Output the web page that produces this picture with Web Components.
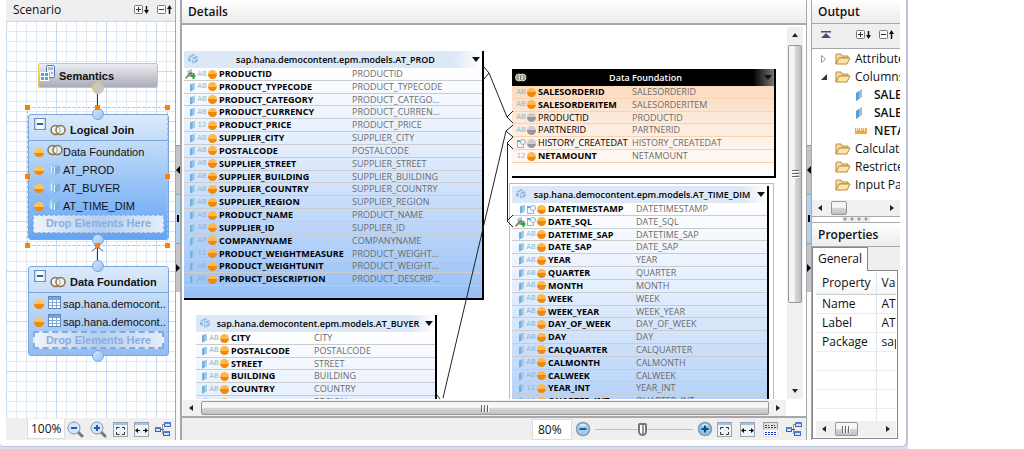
<!DOCTYPE html>
<html lang="en">
<head>
<meta charset="utf-8">
<title>Calculation view editor</title>
<style>
  html, body { margin: 0; height: 100%; background: #fff; overflow: hidden; }
  body { font: 12px/18px "Open Sans", "Noto Sans", sans-serif; color: #111; }
</style>
</head>
<body>
<app-window>
  <scenario-pane></scenario-pane>
  <pane-sash></pane-sash>
  <details-pane></details-pane>
  <pane-sash></pane-sash>
  <side-stack>
    <output-pane></output-pane>
    <properties-pane></properties-pane>
  </side-stack>
</app-window>
<script>
const svg = (w, h, body) => `<svg width="${w}" height="${h}" viewBox="0 0 ${w} ${h}" aria-hidden="true">${body}</svg>`;

const schema = `<g stroke="#3c62ae" fill="#d5e4f8"><rect x=".5" y="6.500" width="5" height="4"/><rect x="9.500" y="1.500" width="6" height="4"/><rect x="8.500" y="10.500" width="6" height="4"/></g><path d="M0 6h6v2H0zM9 1h7v2h-7zM8 10h7v2H8z" fill="#4c7fd8"/><path d="M6 8.500h3M7.500 8.500v-5h2M7.500 8.500v4h1" stroke="#444" fill="none" stroke-dasharray="1 1"/>`;
const frame = `<rect x=".5" y=".5" width="14" height="14" fill="#eef5fa" stroke="#9aa4ac"/><path d="M1 1h13v2H1z" fill="#a9c3dc"/>`;

const icons = {
  expand: svg(16, 12, `<rect x=".5" y="1.500" width="8" height="8" rx="1" fill="#fafafa" stroke="#777"/><path d="M2 5.500h5M4.500 3v5" stroke="#333"/><path d="M12.500 2v6" stroke="#111" stroke-width="1.500"/><path d="M10 6h5l-2.500 4z" fill="#111"/>`),
  collapse: svg(16, 12, `<rect x=".5" y="1.500" width="8" height="8" rx="1" fill="#fafafa" stroke="#777"/><path d="M2 5.500h5" stroke="#333"/><path d="M12.500 4v6" stroke="#111" stroke-width="1.500"/><path d="M10 5h5l-2.500-4z" fill="#111"/>`),
  top: svg(10, 8, `<path d="M0 0h10v1.500H0zM5 2l5 5H0z" fill="#4e4a78"/>`),
  folder: svg(16, 12, `<path d="M1 11V2q0-1 1-1h4l1 2h6v2H5z" fill="#f8dfa0" stroke="#b88a3a"/><path d="M1 11l3-6h11l-3 6z" fill="#fbe6a8" stroke="#b88a3a"/>`),
  attr: svg(8, 12, `<path d="M1 4l6-4v8l-6 4z" fill="#8ec0e6"/><path d="M1 4l3-2v8l-3 2z" fill="#5b9fd4"/>`),
  attrSmall: svg(7, 10, `<path d="M1 2.500L6 .5v7L1 9.500z" fill="#a4cdec"/><path d="M1 2.500l2.500-1v7L1 9.500z" fill="#74b0de"/>`),
  key: svg(11, 10, `<path d="M2 2l5-2v7l-3 1z" fill="#96c6ea"/><path d="M0 9l4-5 3-1 1 2-3 1-4 4z" fill="#8b7a48"/><path d="M8.500 4v6M5.500 7h5" stroke="#2ea043" stroke-width="2"/>`),
  measure: svg(12, 6, `<path d="M0 0h12v6H0z" fill="#f6a63c"/><path d="M1.500 0v3M3.500 0v2M5.500 0v3M7.500 0v2M9.500 0v3" stroke="#fff3d8"/>`),
  date: svg(9, 9, `<rect x=".5" y="1.500" width="6" height="7" fill="#f2fbff" stroke="#7cc0dc"/><circle cx="6" cy="3" r="2.500" fill="#fff" stroke="#9ab"/><path d="M0 1h3v2H0z" fill="#5ab0d8"/>`),
  join: svg(16, 12, `<g fill="none" stroke="#8a7440" stroke-width="1.500"><circle cx="5.500" cy="6" r="4.500" fill="#fff" fill-opacity=".5"/><circle cx="10.500" cy="6" r="4.500" fill="#fff" fill-opacity=".5"/></g>`),
  joinSmall: svg(12, 9, `<g fill="#fff" fill-opacity=".6" stroke="#e8dcc0"><circle cx="4" cy="4.500" r="3.500"/><circle cx="7.500" cy="4.500" r="3.500"/></g><path d="M5.800 2v5" stroke="#6a5a30"/>`),
  view: svg(13, 13, `<path d="M1 3l5-3v2L3 4v6l-2 1z" fill="#a4cdec"/><path d="M4 5l5-3v2L6 6v5l-2 1z" fill="#8cc0e6"/><path d="M7 6l5-3v7l-5 3z" fill="#78aede"/><path d="M3.500 4v7M6.500 5v7" stroke="#e4f0fc"/>`),
  cubes: svg(12, 11, `<path d="M1 3l5-3 3 1-5 3v4L1 7zM5 4l4-2 2 1v4l-4 3-2-1z" fill="#8fbbe2"/><path d="M1 3l3 1 5-3M5 5l2 1 4-2M7 6v4" stroke="#dceaf8" fill="none"/>`),
  table: svg(13, 13, `<rect x=".5" y=".5" width="12" height="12" fill="#fff" stroke="#5f86bd"/><path d="M1 1h11v3H1z" fill="#7ba2d8"/><path d="M1 6.500h11M1 9.500h11M4.500 4v8M8.500 4v8" stroke="#86a8d4"/>`),
  semantics: svg(16, 17, `<rect x="6.500" y=".5" width="8" height="12" rx="1" fill="#e8f0fa" stroke="#4a78c0"/><rect x="8" y="2" width="5" height="3" fill="#9cc0ea"/><path d="M8 8h2M11 8h2M8 10h2" stroke="#c45"/><rect x="0" y="7" width="9" height="9" fill="#fff"/><path d="M1 8h3v3H1zM5 8h3v3H5zM1 12h3v3H1zM5 12h3v3H5z" fill="#58a4d8"/>`),
  zoomOut: svg(17, 17, `<path d="M11 11l4 4" stroke="#777" stroke-width="3" stroke-linecap="round"/><circle cx="7" cy="7" r="6" fill="#d4e6fa" stroke="#8898b0"/><path d="M4 7h6" stroke="#2858b8" stroke-width="2"/>`),
  zoomIn: svg(17, 17, `<path d="M11 11l4 4" stroke="#777" stroke-width="3" stroke-linecap="round"/><circle cx="7" cy="7" r="6" fill="#d4e6fa" stroke="#8898b0"/><path d="M4 7h6M7 4v6" stroke="#2858b8" stroke-width="2"/>`),
  fit: svg(15, 15, frame + `<path d="M3.500 7.500v-2h3M9 5.500h2.500v2M11.500 10v2.500H9M6.500 12.500h-3V10" stroke="#333" fill="none"/>`),
  fitWidth: svg(15, 15, frame + `<path d="M3 8.500h3M9 8.500h3" stroke="#111"/><path d="M1 8.500l3-2.500v5zM14 8.500l-3-2.500v5z" fill="#111"/>`),
  overview: svg(15, 15, `<rect x=".5" y=".5" width="14" height="7" fill="#e0e0e0" stroke="#999"/><rect x=".5" y="7.500" width="14" height="7" fill="#fff" stroke="#ddd"/><path d="M2 3.500h4M8 3.500h4M2 5.500h11" stroke="#445" stroke-dasharray="2 1"/><path d="M2 10.500h11M2 12.500h11" stroke="#2038d8" stroke-dasharray="2 1"/>`),
  schema: svg(16, 16, schema),
  minus: svg(16, 16, `<circle cx="8" cy="8" r="6.500" fill="#9cd0f2" stroke="#8a9aa8" stroke-width="1.500"/><path d="M4 5q4-4 8 0z" fill="#d8effc"/><path d="M4.500 8h7" stroke="#245a88" stroke-width="2"/>`),
  plus: svg(16, 16, `<circle cx="8" cy="8" r="6.500" fill="#86c6f0" stroke="#8a9aa8" stroke-width="1.500"/><path d="M4 5q4-4 8 0z" fill="#d8effc"/><path d="M4.500 8h7M8 4.500v7" stroke="#144a78" stroke-width="2"/>`)
};

const define = (name, render) => customElements.define(name, class extends HTMLElement {
  connectedCallback() {
    if (this.shadowRoot) return;
    const t = document.createElement('template');
    t.innerHTML = render(this);
    this.attachShadow({ mode: 'open' }).append(t.content.cloneNode(true));
  }
});

const base = `* { box-sizing: border-box; }
  svg { display: block; flex: none; }
  button { margin: 0; padding: 0; border: 0; background: none; color: inherit; font: inherit; display: block; flex: none; }
  ul { list-style: none; margin: 0; padding: 0; }
  h2, h3 { margin: 0; font: inherit; }`;

define('app-window', () => `<style>${base}
  :host { display: block; height: 100vh; margin-right: 116px; background: #d9deec; }
  main { display: flex; height: calc(100vh - 2px); padding: 0 6px 6px; border: solid #bcc2dc; border-width: 0 2px 1px 0; border-radius: 0 0 6px 4px; background: #fff; }
  ::slotted(details-pane) { flex: 1; min-width: 0; }
  </style><main><slot></slot></main>`);

define('side-stack', () => `<style>
  :host { display: flex; flex-direction: column; width: 88px; overflow: hidden; flex: none; }
  ::slotted(properties-pane) { flex: 1; min-height: 0; }
  </style><slot></slot>`);

define('pane-sash', () => `<style>${base}
  :host { display: flex; flex-direction: column; justify-content: center; width: 6px; flex: none; padding-bottom: 4px; background: #fafafa; border: solid #a8a8ac; border-width: 0 1px; box-sizing: border-box; }
  button { display: flex; align-items: center; justify-content: center; width: 4px; height: 49px; background: #c4c4c4; border: solid #999; border-width: 1px 0 0; }
  .mid { background: #b4d0ee; border-color: #8aa; }
  </style>
  <button aria-label="Collapse left">${svg(4, 8, '<path d="M4 0v8L0 4z"/>')}</button>
  <button class="mid" aria-label="Restore">${svg(2, 7, '<path d="M0 0h2v7H0z"/>')}</button>
  <button aria-label="Collapse right">${svg(4, 8, '<path d="M0 0v8l4-4z"/>')}</button>`);

/* scroll bar; parts holds the flex weights of the track before the thumb, the thumb, and the track after it */
define('scroll-bar', el => {
  const v = el.hasAttribute('vertical');
  const [a, b, c] = el.getAttribute('parts').split(' ');
  const arrow = pts => svg(6, 6, `<path d="${pts}" fill="#222"/>`);
  return `<style>${base}
  :host { display: flex; flex-direction: ${v ? 'column' : 'row'}; flex: none; ${v ? 'width: 16px' : 'height: 16px'}; background: #f0f0f0; }
  button { width: 16px; height: 16px; display: flex; align-items: center; justify-content: center; }
  .thumb { flex: ${b} 1 0; margin: 1px; display: flex; align-items: center; justify-content: center; border: 1px solid #989898; border-radius: 2px; background: linear-gradient(${v ? 'to right' : 'to bottom'}, #f6f6f6 0 45%, #d8d8da 50%, #bfc0c4); }
  .grip { ${v ? 'width: 7px; height: 8px' : 'width: 8px; height: 7px'}; background: repeating-linear-gradient(${v ? 'to bottom' : 'to right'}, #666 0 1px, #fff 1px 2px, transparent 2px 3px); }
  </style>
  <button aria-label="Back">${arrow(v ? 'M0 5h6L3 1z' : 'M5 0v6L1 3z')}</button>
  <div style="flex:${a} 1 0"></div><div class="thumb">${el.hasAttribute('small') ? '' : '<div class="grip"></div>'}</div><div style="flex:${c} 1 0"></div>
  <button aria-label="Forward">${arrow(v ? 'M0 1h6L3 5z' : 'M1 0v6l4-3z')}</button>`;
});

/* node of the scenario diagram; its ports sit on the top and bottom edges */
define('scenario-node', el => {
  const rows = JSON.parse(el.getAttribute('rows'));
  return `<style>${base}
  :host { display: block; position: absolute; width: 141px; font: 11px/18px "Liberation Sans", sans-serif; }
  section { border: 1px solid #7ba6dc; border-radius: 3px; background: linear-gradient(#dceafa, var(--end, #62a4f4)); padding-bottom: 6px; }
  h3 { display: flex; align-items: center; gap: 4px; height: 26px; padding: 2px 0 0 5px; font-weight: bold; border-bottom: 1px solid #7ba6dc; }
  h3 button { width: 12px; height: 12px; margin-bottom: 10px; border: 1px solid #6c90c0; background: linear-gradient(#fff 4px, #2b5ca0 4px 6px, #fff 6px) content-box #fff; padding: 0 2px; }
  h3 span { padding-top: 3px; white-space: nowrap; }
  h3 svg { margin-top: 3px; }
  ul { padding: 2px 0 0 5px; }
  li { display: flex; align-items: center; height: 18px; white-space: nowrap; }
  .ball { width: 10px; height: 9px; border-radius: 50%; background: linear-gradient(#ffc25c 50%, #f08a08 50%); }
  .icon { width: 19px; display: flex; justify-content: flex-end; padding: 0 2px 4px 0; }
  .join .icon { padding-right: 0; }
  .drop { margin: 0 4px; height: 18px; line-height: 15px; border: var(--drop, 1px dashed #9ab4d8); border-radius: 2px; text-align: center; font-weight: bold; color: #88aede; background: linear-gradient(90deg, #f0f4fa, #b4cef0 50%, #e4ecf8); }
  .port { position: absolute; left: 64px; width: 12px; height: 12px; border: 1px solid #7ba6dc; border-radius: 50%; background: linear-gradient(135deg, #d0e4fc, #9cc4f4); }
  .in { top: -6px; } .out { bottom: -6px; }
  </style>
  <section><h3><button aria-label="Collapse node"></button>${icons.join}<span>${el.getAttribute('label')}</span></h3>
  <ul>${rows.map(([i, t]) => `<li class="${i}"><span class="ball"></span><span class="icon">${icons[i]}</span>${t}</li>`).join('')}</ul>
  <div class="drop">Drop Elements Here</div></section>
  <div class="port in"></div><div class="port out"></div>`;
});

define('semantics-node', () => `<style>${base}
  :host { display: block; position: absolute; width: 120px; font: bold 11px/18px "Liberation Sans", sans-serif; }
  section { display: flex; align-items: center; gap: 3px; height: 25px; border: 1px solid #ecc84c; border-radius: 2px; background: linear-gradient(#ececf2, #acacba); padding: 0 0 0 1px; }
  svg { margin-bottom: 4px; }
  .port { position: absolute; left: 54px; top: 19px; width: 12px; height: 12px; border: 1px solid #ecc84c; border-radius: 50%; background: #c6c6d0; }
  </style><section>${icons.semantics}<span>Semantics</span></section><div class="port"></div>`);

const tools = names => names.map(([i, l]) => `<button aria-label="${l}" title="${l}">${icons[i]}</button>`).join('');
const handles = [27, 97, 167].flatMap(x => [107, 176, 245].map(y => [x, y])).filter(([x, y]) => !(x === 97 && y === 176));

define('scenario-pane', () => `<style>${base}
  :host { display: flex; flex-direction: column; width: 169px; flex: none; }
  header { display: flex; align-items: center; gap: 7px; height: 21px; padding: 0 2px 2px 7px; background: #efefef; }
  h2 { flex: 1; }
  .canvas { position: relative; flex: 1; overflow: hidden; min-height: 0;
    background: repeating-linear-gradient(#c6d9ee 0 1px, transparent 1px 50px), repeating-linear-gradient(90deg, #c6d9ee 0 1px, transparent 1px 50px), repeating-linear-gradient(#dfeaf6 0 1px, transparent 1px 10px), repeating-linear-gradient(90deg, #dfeaf6 0 1px, #fff 1px 10px); }
  .links { position: absolute; left: -6px; top: -21px; }
  footer { display: flex; align-items: center; height: 22px; padding-left: 21px; background: #efefef; gap: 6px; }
  input { width: 38px; height: 20px; border: 1px solid #ddd; border-width: 0 1px 1px; background: #fff; font: inherit; color: inherit; padding: 0 0 0 3px; margin: 0 -4px 0 0; }
  </style>
  <header><h2>Scenario</h2>${tools([['expand', 'Expand all'], ['collapse', 'Collapse all']])}</header>
  <div class="canvas">
    <svg class="links" width="175" height="420" aria-hidden="true">
      <path d="M97.500 90v20M97.500 246v18" stroke="#2b2b80" fill="none"/>
    </svg>
    <semantics-node style="left:32px;top:42px"></semantics-node>
    <scenario-node style="left:22px;top:93px" label="Logical Join" rows='[["join","Data Foundation"],["view","AT_PROD"],["view","AT_BUYER"],["view","AT_TIME_DIM"]]'></scenario-node>
    <scenario-node style="left:22px;top:245px;--end:#92bdf2;--drop:2px dashed #82aadc" label="Data Foundation" rows='[["table","sap.hana.democont.."],["table","sap.hana.democont.."]]'></scenario-node>
    <svg class="links" width="175" height="420" aria-hidden="true">
      <path d="M92 251l5.500-4 5.500 4" stroke="#5858a0" fill="none"/>
      <rect x="27.500" y="107.500" width="140" height="138" fill="none" stroke="#f8b060" stroke-dasharray="3 2"/>
      ${handles.map(([x, y]) => `<rect x="${x - 2}" y="${y - 2}" width="5" height="5" fill="#ff8000"/>`).join('')}
    </svg>
  </div>
  <footer><input aria-label="Scenario zoom" value="100%">${tools([['zoomOut', 'Zoom out'], ['zoomIn', 'Zoom in'], ['fit', 'Fit page'], ['fitWidth', 'Fit width'], ['schema', 'Auto layout']])}</footer>`);

/* table of the details diagram: rows are [icon, type, state, name, value] */
define('table-node', el => {
  const rows = JSON.parse(el.getAttribute('rows'));
  const type = t => t === 'date' ? icons.date : `<i>${t}</i>`;
  return `<style>${base}
  :host { display: block; position: absolute; font-size: 9px; line-height: 12px; }
  section { height: 100%; border: solid #000; border-width: 0 2px 2px 0; background: linear-gradient(var(--from, #fff) 17px, var(--mid, #dce9fc) 45%, var(--to, #98c0f6)); }
  h3 { display: flex; align-items: center; height: 17px; padding: 0 2px 0 3px; font-weight: 600; color: var(--head-ink, #000); background: var(--head, linear-gradient(90deg, #dce8f6 90%, #fff)); }
  h3 span { flex: 1; text-align: center; white-space: nowrap; }
  ul { display: grid; grid-auto-rows: 1fr; height: var(--rows); }
  li { display: grid; grid-template-columns: var(--lead) var(--name) 1fr; align-items: center; min-height: 0; padding-bottom: 1px; border-bottom: 1px solid var(--rule, #ccc); white-space: nowrap; }
  .lead { display: flex; align-items: center; justify-content: flex-end; gap: 1px; padding-right: 2px; }
  .lead i { font: 7px/9px "DejaVu Sans", sans-serif; color: #8fb6ca; width: 10px; text-align: center; }
  .ball { width: 9px; height: 9px; border-radius: 50%; background: linear-gradient(#ffb84c 50%, #f08808 50%); }
  .off .ball { background: linear-gradient(#ccc 50%, #999 50%); }
  b { font-weight: 700; color: #000; } .off b { font-weight: 400; }
  em { font-style: normal; color: #6c6c6c; }
  </style>
  <section><h3>${icons[el.getAttribute('icon') || 'cubes']}<span>${el.getAttribute('label')}</span><button aria-label="Table menu">${svg(8, 5, '<path d="M0 0h8L4 5z" fill="#111"/>')}</button></h3>
  <ul>${rows.map(([ic, t, s, n, v]) => `<li class="${s}"><span class="lead">${ic ? icons[ic] : ''}${type(t)}<span class="ball"></span></span><b>${n}</b><em>${v || n}</em></li>`).join('')}</ul></section>`;
});

const a = (n, v, t = 'AB') => ['attrSmall', t, 'on', n, v];
const prod = [['key', 'AB', 'on', 'PRODUCTID'], a('PRODUCT_TYPECODE'), a('PRODUCT_CATEGORY', 'PRODUCT_CATEGO…'), a('PRODUCT_CURRENCY', 'PRODUCT_CURREN…'), a('PRODUCT_PRICE', '', '12'), a('SUPPLIER_CITY'), a('POSTALCODE'), a('SUPPLIER_STREET'), a('SUPPLIER_BUILDING'), a('SUPPLIER_COUNTRY'), a('SUPPLIER_REGION'), a('PRODUCT_NAME'), a('SUPPLIER_ID'), a('COMPANYNAME'), a('PRODUCT_WEIGHTMEASURE', 'PRODUCT_WEIGHT…', '12'), a('PRODUCT_WEIGHTUNIT', 'PRODUCT_WEIGHT…'), a('PRODUCT_DESCRIPTION', 'PRODUCT_DESCRIP…')];
const buyer = ['CITY', 'POSTALCODE', 'STREET', 'BUILDING', 'COUNTRY', 'REGION'].map(n => a(n));
const found = [['', 'AB', 'on', 'SALESORDERID'], ['', 'AB', 'on', 'SALESORDERITEM'], ['', 'AB', 'off', 'PRODUCTID'], ['', 'AB', 'off', 'PARTNERID'], ['', 'date', 'off', 'HISTORY_CREATEDAT'], ['', '12', 'on', 'NETAMOUNT']];
const time = [a('DATETIMESTAMP', '', 'date'), ['key', 'date', 'on', 'DATE_SQL'], ...['DATETIME_SAP', 'DATE_SAP', 'YEAR', 'QUARTER', 'MONTH', 'WEEK', 'WEEK_YEAR', 'DAY_OF_WEEK', 'DAY', 'CALQUARTER', 'CALMONTH', 'CALWEEK'].map(n => a(n)), a('YEAR_INT', '', '12'), a('QUARTER_INT', '', '12')];
const node = (style, label, rows, extra = '') => `<table-node style="${style}" label="${label}" ${extra} rows='${JSON.stringify(rows)}'></table-node>`;

define('details-pane', () => `<style>${base}
  :host { display: flex; flex-direction: column; border-left: 1px solid #a8a8ac; box-sizing: border-box; }
  header { flex: none; height: 25px; padding: 3px 6px; font-weight: 600; background: linear-gradient(#fff, #ececec); border-bottom: 2px solid #a8a8ac; }
  .body { flex: 1; min-height: 0; display: flex; padding: 2px 3px 0 2px; }
  .canvas { position: relative; flex: 1; overflow: hidden; }
  .links { position: absolute; left: -184px; top: -27px; }
  .focus { position: absolute; left: 325px; top: 156px; width: 265px; height: 300px; border: 1px solid #f4bc1c; }
  .hbar { padding: 1px 20px 0 1px; border-bottom: 2px solid #a8a8ac; }
  footer { display: flex; align-items: center; justify-content: flex-end; height: 22px; flex: none; padding-right: 4px; background: #efefef; gap: 4px; }
  .tools { display: flex; align-items: center; gap: 8px; }
  .zoom { width: 40px; height: 21px; border: 1px solid #ddd; background: #fff; font: inherit; color: inherit; padding: 0 0 0 5px; margin: 0 -1px 0 0; }
  .slide { appearance: none; width: 98px; height: 16px; margin: 0; background: linear-gradient(#c0c0c0, #c0c0c0) center / 100% 1px no-repeat; }
  .slide::-webkit-slider-thumb { appearance: none; width: 9px; height: 13px; border: 2px solid #777; border-radius: 2px 2px 5px 5px; background: linear-gradient(90deg, #fff 2px, #999 2px 4px, #fff 4px); }
  </style>
  <header>Details</header>
  <div class="body"><div class="canvas">
    ${node('left:0;top:24px;width:300px;height:249px;--rows:218px;--lead:35px;--name:133px', 'sap.hana.democontent.epm.models.AT_PROD', prod)}
    ${node('left:12px;top:288px;width:241px;height:240px;--rows:77px;--lead:35px;--name:83px', 'sap.hana.democontent.epm.models.AT_BUYER', buyer)}
    ${node('left:328px;top:42px;width:264px;height:109px;--rows:77px;--lead:26px;--name:94px;--from:#fcdabd;--mid:#fde8d8;--to:#fff;--rule:#fad2ae;--head:linear-gradient(90deg,#000 92%,#777);--head-ink:#fff', 'Data Foundation', found, 'icon="joinSmall"')}
    <div class="focus"></div>
    ${node('left:328px;top:159px;width:257px;height:280px;--rows:205px;--lead:36px;--name:88px', 'sap.hana.democontent.epm.models.AT_TIME_DIM', time)}
    <svg class="links" width="800" height="430" fill="none" stroke="#222" aria-hidden="true"><path d="M484 67l5 6-5 6M489 73l18 44M513 111l-6 6 6 6M513 125l-7 6 7 6M506 131l-63 267M513 137l-6 6 6 6M507.500 143v78M513 215l-6 6 6 6M437 395l3 4"/></svg>
  </div><scroll-bar vertical parts="1 260 80"></scroll-bar></div>
  <div class="hbar"><scroll-bar parts="1 557 0"></scroll-bar></div>
  <footer><input class="zoom" aria-label="Details zoom" value="80%">${tools([['minus', 'Zoom out']])}<input class="slide" type="range" aria-label="Zoom" value="48">${tools([['plus', 'Zoom in']])}<div class="tools">${tools([['fit', 'Fit page'], ['fitWidth', 'Fit width'], ['overview', 'Overview'], ['schema', 'Auto layout']])}</div></footer>`);

define('output-pane', () => {
  const arrow = o => o === 'open' ? svg(7, 7, '<path d="M6 0v6H0z" fill="#333"/>') : o === 'shut' ? svg(6, 8, '<path d="M.5.5v7l4-3.500z" fill="#fff" stroke="#999"/>') : '';
  const rows = [['shut', 'folder', 'Attribute'], ['open', 'folder', 'Columns'], ['leaf', 'attr', 'SALE'], ['leaf', 'attr', 'SALE'], ['leaf', 'measure', 'NETA'], ['', 'folder', 'Calculate'], ['', 'folder', 'Restricte'], ['', 'folder', 'Input Pa']];
  return `<style>${base}
  :host { display: block; }
  h2 { height: 24px; padding: 3px 6px; font-weight: 600; background: linear-gradient(#fff, #ececec); border-bottom: 1px solid #a8a8ac; }
  .bar { display: flex; align-items: center; height: 25px; padding: 0 5px 3px 9px; gap: 7px; background: #efefef; border-bottom: 1px solid #a8a8ac; }
  .bar button:first-child { margin-right: auto; }
  ul { padding: 1px 0 6px; overflow: hidden; }
  li { display: flex; align-items: center; height: 18px; white-space: nowrap; }
  .arrow { width: 23px; padding-left: 9px; flex: none; }
  .icon { width: 20px; flex: none; }
  .leaf { font-weight: 600; } .leaf .arrow { width: 43px; } .leaf .icon { width: 19px; }
  .leaf .icon svg { margin: 0 auto 0 0; }
  .grip { height: 7px; border: solid #a8a8ac; border-width: 1px 0; background: radial-gradient(circle at 3px 2px, #999 1px, #efefef 2px) 0 0 / 7px 5px content-box #efefef; padding: 0 30px; }
  </style>
  <h2>Output</h2>
  <div class="bar">${tools([['top', 'Go to top'], ['expand', 'Expand all'], ['collapse', 'Collapse all']])}</div>
  <ul>${rows.map(([k, i, t]) => `<li class="${k}"><span class="arrow">${arrow(k)}</span><span class="icon">${icons[i]}</span>${t}</li>`).join('')}</ul>
  <scroll-bar small parts="2 15 38"></scroll-bar>
  <div class="grip"></div>`;
});

define('properties-pane', () => `<style>${base}
  :host { display: flex; flex-direction: column; }
  h2 { flex: none; height: 24px; padding: 3px 6px; font-weight: 600; background: linear-gradient(#fff, #ececec); border-bottom: 1px solid #a8a8ac; }
  nav { flex: none; display: flex; height: 23px; background: #efefef; }
  nav button { width: 56px; height: 24px; padding-bottom: 2px; position: relative; border: 1px solid #85858f; border-bottom: 0; background: #fff; }
  .box { flex: 1; min-height: 0; display: flex; flex-direction: column; margin-right: 2px; padding: 1px 1px 1px 3px; border: 1px solid #85858f; margin-bottom: 1px; }
  .view { flex: 1; min-height: 0; overflow: hidden; background: repeating-linear-gradient(transparent 0 18px, #ececec 18px 19px) 0 23px no-repeat; }
  table { border-collapse: collapse; width: 100%; height: 100%; table-layout: fixed; }
  th, td { height: 19px; padding: 0 0 0 6px; text-align: left; font-weight: 400; white-space: nowrap; border-right: 1px solid #dfe9f4; }
  th:last-child, td:last-child { padding-left: 5px; border-right: 0; }
  th:first-child, td:first-child { width: 60px; }
  th { height: 22px; border-bottom: 1px solid #ccc; background: linear-gradient(#fff 40%, #f4f5f6); }
  .rest td { height: auto; }
  </style>
  <h2>Properties</h2>
  <nav role="tablist"><button role="tab" aria-selected="true">General</button></nav>
  <div class="box"><div class="view"><table><tr><th>Property</th><th>Val</th></tr><tr><td>Name</td><td>AT</td></tr><tr><td>Label</td><td>AT</td></tr><tr><td>Package</td><td>sap</td></tr><tr class="rest"><td></td><td></td></tr></table></div>
  <scroll-bar parts="2 23 23"></scroll-bar></div>`);
</script>
</body>
</html>
